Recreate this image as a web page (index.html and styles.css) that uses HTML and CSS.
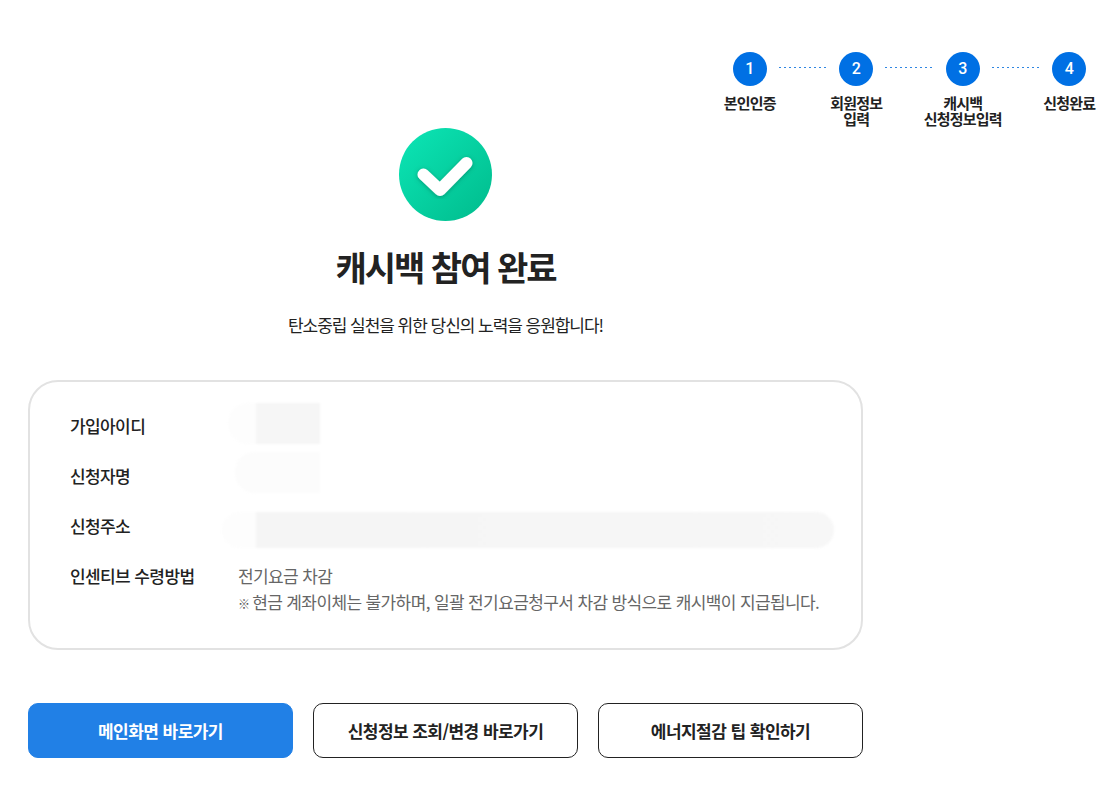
FILE: index.html
```html
<!DOCTYPE html>
<html lang="ko">
<head>
    <meta charset="UTF-8">
    <meta name="viewport" content="width=device-width, initial-scale=1.0">
    <title>캐시백 참여 완료</title>
    <link rel="stylesheet" href="styles.css">
</head>
<body>
    <div class="page">
        <ol class="steps">
            <li class="step"><span class="step-num">1</span><span class="step-name">본인인증</span></li>
            <li class="step"><span class="step-num">2</span><span class="step-name">회원정보<br>입력</span></li>
            <li class="step"><span class="step-num">3</span><span class="step-name">캐시백<br>신청정보입력</span></li>
            <li class="step"><span class="step-num">4</span><span class="step-name">신청완료</span></li>
        </ol>

        <div class="main">
            <div class="result">
                <svg class="check-icon" width="93" height="93" viewBox="0 0 93 93">
                    <defs>
                        <linearGradient id="checkBg" x1="0" y1="0" x2="1" y2="1">
                            <stop offset="0" stop-color="#0ce6b6"/>
                            <stop offset="1" stop-color="#00bb8c"/>
                        </linearGradient>
                        <filter id="checkShadow" x="-30%" y="-30%" width="160%" height="160%">
                            <feGaussianBlur in="SourceGraphic" stdDeviation="0.7" result="soft"/>
                            <feDropShadow in="soft" dx="0" dy="1" stdDeviation="2" flood-color="#00644b" flood-opacity="0.5"/>
                        </filter>
                    </defs>
                    <circle cx="46.5" cy="46.5" r="46.5" fill="url(#checkBg)"/>
                    <path d="M24.5 46.5 L41 62 L67.5 35" fill="none" stroke="#fff" stroke-width="12" stroke-linecap="round" stroke-linejoin="round" filter="url(#checkShadow)"/>
                </svg>
                <h1>캐시백 참여 완료</h1>
                <p class="result-text">탄소중립 실천을 위한 당신의 노력을 응원합니다!</p>
            </div>

            <div class="card">
                <div class="row">
                    <div class="row-label">가입아이디</div>
                    <div class="row-value"><div class="masked masked-id"></div></div>
                </div>
                <div class="row">
                    <div class="row-label">신청자명</div>
                    <div class="row-value"><div class="masked masked-name"></div></div>
                </div>
                <div class="row">
                    <div class="row-label">신청주소</div>
                    <div class="row-value"><div class="masked masked-addr"></div></div>
                </div>
                <div class="row">
                    <div class="row-label">인센티브 수령방법</div>
                    <div class="row-value">
                        전기요금 차감
                        <p class="note"><span class="note-mark">※</span> 현금 계좌이체는 불가하며, 일괄 전기요금청구서 차감 방식으로 캐시백이 지급됩니다.</p>
                    </div>
                </div>
            </div>

            <div class="buttons">
                <a class="btn btn-primary">메인화면 바로가기</a>
                <a class="btn">신청정보 조회/변경 바로가기</a>
                <a class="btn">에너지절감 팁 확인하기</a>
            </div>
        </div>
    </div>
</body>
</html>
```

FILE: styles.css
```css
* {
    margin: 0;
    padding: 0;
    box-sizing: border-box;
}
body {
    font-family: "Noto Sans CJK KR", "Noto Sans", sans-serif;
    background-color: #fff;
    color: #222;
}
.page {
    height: 789px;
    overflow: hidden;
    padding-top: 52px;
}

/* steps */
.steps {
    display: flex;
    justify-content: flex-end;
    list-style: none;
    margin-right: -7.5px;
}
.step {
    position: relative;
    display: flex;
    flex-direction: column;
    align-items: center;
    width: 106.5px;
}
.step:not(:last-child)::after {
    content: "";
    position: absolute;
    top: 15px;
    left: 82px;
    width: 48px;
    height: 1px;
    background: repeating-linear-gradient(to right, #2f86e2 0 2px, transparent 2px 5px);
}
.step-num {
    width: 34px;
    height: 34px;
    border-radius: 50%;
    background-color: #0070e4;
    color: #fff;
    font-family: "Roboto", sans-serif;
    font-size: 16px;
    font-weight: 500;
    line-height: 34px;
    text-align: center;
}
.step-name {
    margin-top: 9px;
    font-size: 15px;
    font-weight: 700;
    line-height: 16px;
    letter-spacing: -0.8px;
    text-align: center;
    white-space: nowrap;
}

/* result */
.main {
    width: 835px;
    margin-left: 28px;
}
.result {
    display: flex;
    flex-direction: column;
    align-items: center;
    margin-top: 1px;
}
.check-icon {
    display: block;
}
h1 {
    margin-top: 21px;
    font-size: 34px;
    font-weight: 700;
    line-height: 50px;
    letter-spacing: -2px;
}
.result-text {
    margin-top: 21px;
    font-size: 17px;
    line-height: 24px;
    letter-spacing: -1.04px;
}

/* info card */
.card {
    margin-top: 43px;
    height: 270px;
    padding: 21px 40px;
    border: 2px solid #e2e2e2;
    border-radius: 30px;
}
.row {
    display: grid;
    grid-template-columns: 168px 1fr;
    min-height: 50px;
    font-size: 17px;
    line-height: 24px;
    letter-spacing: -0.6px;
    padding-top: 11px;
}
.row-label {
    font-weight: 500;
}
.row-value {
    color: #666;
}
.note {
    margin-top: 2px;
    line-height: 24px;
    letter-spacing: -0.62px;
}
.note-mark {
    font-size: 12px;
    font-weight: 700;
    color: #555;
    letter-spacing: -2px;
}
.masked {
    background-color: #f5f5f5;
    border-radius: 20px 0 0 20px;
    filter: blur(1px);
}
.masked-id {
    width: 92px;
    height: 41px;
    margin: -11px 0 0 -10px;
    background: linear-gradient(to right, #fdfdfd 30%, #f6f6f6 30%);
}
.masked-name {
    width: 85px;
    height: 41px;
    margin: -12px 0 0 -3px;
    background-color: #fcfcfc;
}
.masked-addr {
    width: 612px;
    height: 36px;
    margin: -2px 0 0 -16px;
    border-radius: 18px;
    background: linear-gradient(to right, #fdfdfd 5.5%, #f5f5f5 5.5%, #f7f7f7 100%);
}

/* buttons */
.buttons {
    display: flex;
    gap: 20px;
    margin-top: 53px;
}
.btn {
    flex: 1;
    height: 55px;
    border: 1px solid #222;
    border-radius: 10px;
    font-size: 17px;
    font-weight: 700;
    line-height: 53px;
    letter-spacing: -0.55px;
    text-align: center;
}
.btn-primary {
    background-color: #2180e6;
    border-color: #2180e6;
    color: #fff;
}
```
